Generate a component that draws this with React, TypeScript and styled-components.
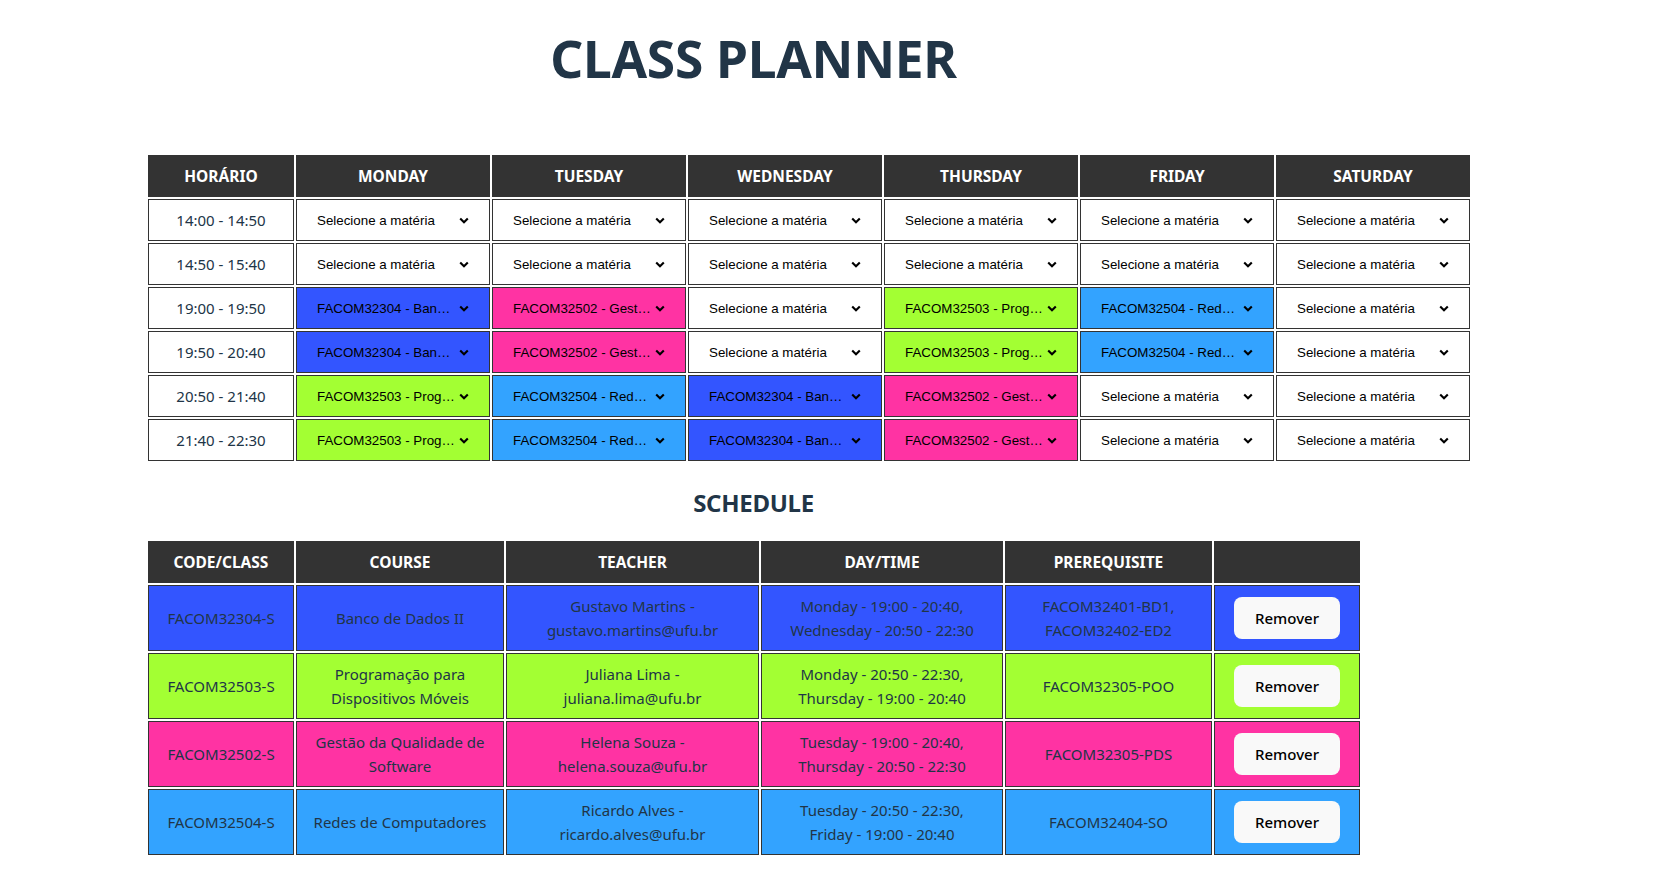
import React from 'react';
import styled, { createGlobalStyle } from 'styled-components';

const GlobalStyle = createGlobalStyle`
  * {
    box-sizing: border-box;
  }

  body {
    margin: 0;
    background: #ffffff;
    color: #213547;
    font-family: 'Noto Sans', 'Open Sans', sans-serif;
  }
`;

const Page = styled.div`
  width: 1215px;
  margin-left: 146px;
  padding: 29px 0 40px;
`;

const Title = styled.h1`
  margin: 0 0 65px;
  font-size: 51.5px;
  line-height: 59px;
  font-weight: 700;
  letter-spacing: -0.3px;
  text-align: center;
  color: #213547;
`;

const SectionTitle = styled.h2`
  margin: 22px 0 18px;
  font-size: 24px;
  line-height: 36px;
  font-weight: 700;
  letter-spacing: -0.3px;
  text-align: center;
  color: #213547;
`;

const Table = styled.table`
  border-collapse: separate;
  border-spacing: 2px;
  table-layout: fixed;
  width: ${(props) => props.width}px;
`;

const HeadCell = styled.th`
  padding: 8px;
  border: 1px solid #333;
  background: #333;
  color: #fff;
  font-size: 15.5px;
  line-height: 24px;
  font-weight: 700;
  text-align: center;
`;

const TimeCell = styled.td`
  padding: 8px;
  border: 1px solid #333;
  background: #fff;
  font-size: 15px;
  line-height: 24px;
  text-align: center;
`;

const PickCell = styled.td<{ $bg: string }>`
  padding: 8px 0;
  border: 1px solid #333;
  background: ${(props) => props.$bg};
`;

const Picker = styled.button`
  display: flex;
  align-items: center;
  width: 100%;
  height: 24px;
  margin: 0;
  padding: 0 0 0 20px;
  border: none;
  background: transparent;
  color: #000;
  font-family: 'Liberation Sans', Arial, sans-serif;
  font-size: 13.333px;
  cursor: pointer;
`;

const PickerText = styled.span`
  flex: 0 0 139.5px;
  overflow: hidden;
  white-space: nowrap;
  text-overflow: ellipsis;
  text-align: left;
`;

const Chevron = styled.svg`
  flex: none;
  width: 10px;
  height: 7px;
  margin-left: 2px;
`;

const InfoCell = styled.td<{ $bg: string }>`
  padding: 8px;
  border: 1px solid #333;
  background: ${(props) => props.$bg};
  font-size: 15px;
  line-height: 24px;
  text-align: center;
  vertical-align: middle;
`;

const RemoveButton = styled.button`
  padding: 9.6px 19.5px;
  border: 1px solid transparent;
  border-radius: 8px;
  background: #f9f9f9;
  color: #000;
  font-family: inherit;
  font-size: 15px;
  font-weight: 500;
  line-height: 21px;
  cursor: pointer;
`;

type Course = {
  code: string;
  label: string;
  color: string;
};

const COURSES: { [key: string]: Course } = {
  bd: { code: 'FACOM32304', label: 'FACOM32304 - Banco de Dados II', color: '#3355ff' },
  gqs: { code: 'FACOM32502', label: 'FACOM32502 - Gestão da Qualidade de Software', color: '#ff33a3' },
  pdm: { code: 'FACOM32503', label: 'FACOM32503 - Programação para Dispositivos Móveis', color: '#a3ff33' },
  rc: { code: 'FACOM32504', label: 'FACOM32504 - Redes de Computadores', color: '#33a3ff' },
};

const DAYS = ['MONDAY', 'TUESDAY', 'WEDNESDAY', 'THURSDAY', 'FRIDAY', 'SATURDAY'];

const SLOTS: { time: string; picks: (string | null)[] }[] = [
  { time: '14:00 - 14:50', picks: [null, null, null, null, null, null] },
  { time: '14:50 - 15:40', picks: [null, null, null, null, null, null] },
  { time: '19:00 - 19:50', picks: ['bd', 'gqs', null, 'pdm', 'rc', null] },
  { time: '19:50 - 20:40', picks: ['bd', 'gqs', null, 'pdm', 'rc', null] },
  { time: '20:50 - 21:40', picks: ['pdm', 'rc', 'bd', 'gqs', null, null] },
  { time: '21:40 - 22:30', picks: ['pdm', 'rc', 'bd', 'gqs', null, null] },
];

const SCHEDULE = [
  {
    id: 'bd',
    code: 'FACOM32304-S',
    course: 'Banco de Dados II',
    teacher: ['Gustavo Martins -', 'gustavo.martins@ufu.br'],
    time: ['Monday - 19:00 - 20:40,', 'Wednesday - 20:50 - 22:30'],
    prereq: ['FACOM32401-BD1,', 'FACOM32402-ED2'],
  },
  {
    id: 'pdm',
    code: 'FACOM32503-S',
    course: 'Programação para Dispositivos Móveis',
    teacher: ['Juliana Lima -', 'juliana.lima@ufu.br'],
    time: ['Monday - 20:50 - 22:30,', 'Thursday - 19:00 - 20:40'],
    prereq: ['FACOM32305-POO'],
  },
  {
    id: 'gqs',
    code: 'FACOM32502-S',
    course: 'Gestão da Qualidade de Software',
    teacher: ['Helena Souza -', 'helena.souza@ufu.br'],
    time: ['Tuesday - 19:00 - 20:40,', 'Thursday - 20:50 - 22:30'],
    prereq: ['FACOM32305-PDS'],
  },
  {
    id: 'rc',
    code: 'FACOM32504-S',
    course: 'Redes de Computadores',
    teacher: ['Ricardo Alves -', 'ricardo.alves@ufu.br'],
    time: ['Tuesday - 20:50 - 22:30,', 'Friday - 19:00 - 20:40'],
    prereq: ['FACOM32404-SO'],
  },
];

const SCHEDULE_COLS = [
  { title: 'CODE/CLASS', width: 146 },
  { title: 'COURSE', width: 208 },
  { title: 'TEACHER', width: 253 },
  { title: 'DAY/TIME', width: 242 },
  { title: 'PREREQUISITE', width: 207 },
  { title: '', width: 146 },
];

const Lines = ({ lines }: { lines: string[] }) => (
  <>
    {lines.map((line, i) => (
      <React.Fragment key={i}>
        {i > 0 && <br />}
        {line}
      </React.Fragment>
    ))}
  </>
);

const App = () => {
  return (
    <Page>
      <GlobalStyle />
      <Title>CLASS PLANNER</Title>

      <Table width={1326}>
        <colgroup>
          <col style={{ width: 146 }} />
          {DAYS.map((day) => (
            <col key={day} style={{ width: 194 }} />
          ))}
        </colgroup>
        <thead>
          <tr>
            <HeadCell>HORÁRIO</HeadCell>
            {DAYS.map((day) => (
              <HeadCell key={day}>{day}</HeadCell>
            ))}
          </tr>
        </thead>
        <tbody>
          {SLOTS.map((slot) => (
            <tr key={slot.time}>
              <TimeCell>{slot.time}</TimeCell>
              {slot.picks.map((pick, i) => {
                const course = pick ? COURSES[pick] : null;
                return (
                  <PickCell key={i} $bg={course ? course.color : '#fff'}>
                    <Picker type="button">
                      <PickerText>{course ? course.label : 'Selecione a matéria'}</PickerText>
                      <Chevron viewBox="0 0 10 7">
                        <path d="M1.2 1.4 L5 5.2 L8.8 1.4" fill="none" stroke="#000" strokeWidth="2.1" />
                      </Chevron>
                    </Picker>
                  </PickCell>
                );
              })}
            </tr>
          ))}
        </tbody>
      </Table>

      <SectionTitle>SCHEDULE</SectionTitle>

      <Table width={1216}>
        <colgroup>
          {SCHEDULE_COLS.map((col, i) => (
            <col key={i} style={{ width: col.width }} />
          ))}
        </colgroup>
        <thead>
          <tr>
            {SCHEDULE_COLS.map((col, i) => (
              <HeadCell key={i}>{col.title}</HeadCell>
            ))}
          </tr>
        </thead>
        <tbody>
          {SCHEDULE.map((row) => {
            const bg = COURSES[row.id].color;
            return (
              <tr key={row.code}>
                <InfoCell $bg={bg}>{row.code}</InfoCell>
                <InfoCell $bg={bg}>{row.course}</InfoCell>
                <InfoCell $bg={bg}>
                  <Lines lines={row.teacher} />
                </InfoCell>
                <InfoCell $bg={bg}>
                  <Lines lines={row.time} />
                </InfoCell>
                <InfoCell $bg={bg}>
                  <Lines lines={row.prereq} />
                </InfoCell>
                <InfoCell $bg={bg}>
                  <RemoveButton type="button">Remover</RemoveButton>
                </InfoCell>
              </tr>
            );
          })}
        </tbody>
      </Table>
    </Page>
  );
};

export default App;
